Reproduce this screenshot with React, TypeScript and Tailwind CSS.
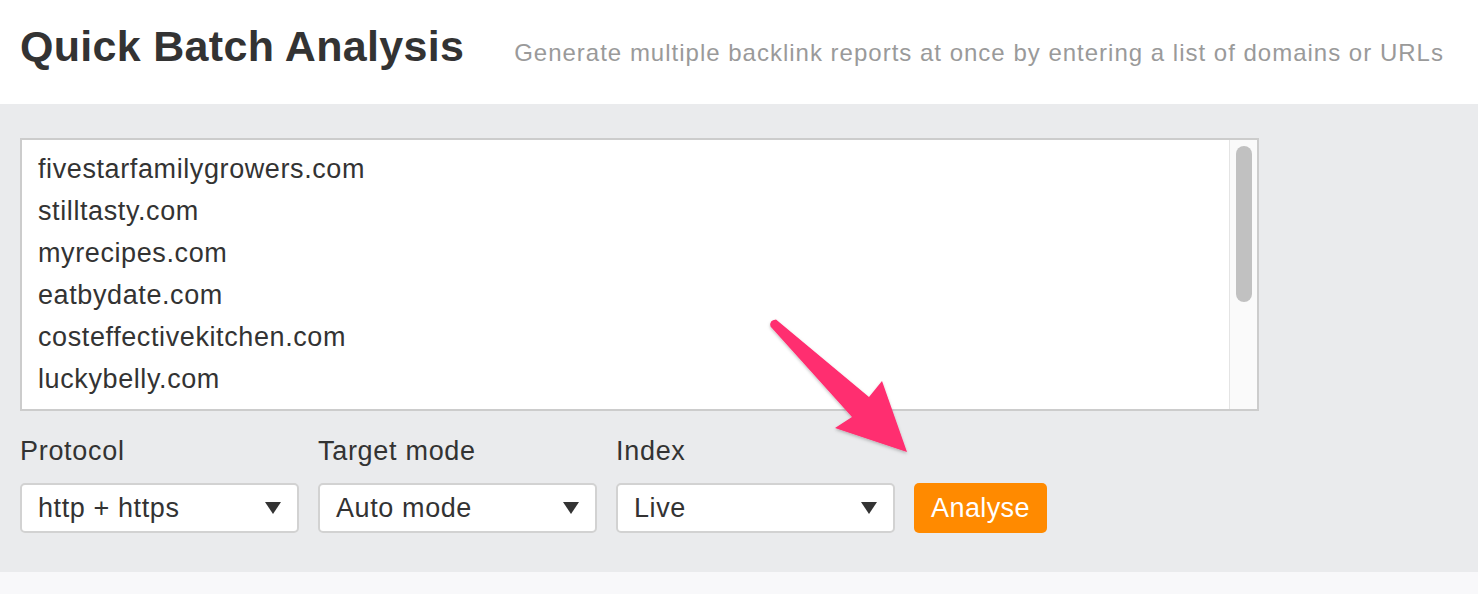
const domains = [
  "fivestarfamilygrowers.com",
  "stilltasty.com",
  "myrecipes.com",
  "eatbydate.com",
  "costeffectivekitchen.com",
  "luckybelly.com",
];

function Caret() {
  return (
    <svg width="16" height="12" viewBox="0 0 16 12" className="shrink-0">
      <polygon points="0,0 16,0 8,12" fill="#333" />
    </svg>
  );
}

function Select({ label, value }: { label: string; value: string }) {
  return (
    <div className="flex flex-col w-[279px]">
      <div className="h-[30px] leading-[30px] text-[27px] tracking-[0.7px] text-[#333] mb-[17px]">{label}</div>
      <div className="h-[50px] bg-white border-2 border-[#d2d2d2] rounded-[5px] flex items-center justify-between pl-[16px] pr-[16px]">
        <span className="text-[27px] tracking-[0.6px] text-[#333]">{value}</span>
        <Caret />
      </div>
    </div>
  );
}

export default function App() {
  return (
    <div className="relative w-[1478px] h-[594px] overflow-hidden bg-[#f8f8fa] font-['Liberation_Sans',Arial,sans-serif]">
      <header className="h-[104px] bg-white flex items-baseline pl-[20px] pt-[21px]">
        <h1 className="text-[43px] font-bold tracking-[0.3px] text-[#333] leading-[50px]">Quick Batch Analysis</h1>
        <p className="ml-[50px] text-[24px] tracking-[1px] text-[#9a9a9a]">
          Generate multiple backlink reports at once by entering a list of domains or URLs
        </p>
      </header>

      <section className="bg-[#eaebed] h-[468px] pt-[34px] px-[20px]">
        <div className="w-[1239px] h-[273px] bg-white border-2 border-[#cccccc] flex overflow-hidden">
          <div className="flex-1 pl-[16px] pt-[8px]">
            {domains.map((d) => (
              <div key={d} className="h-[42px] leading-[42px] text-[27px] tracking-[0.6px] text-[#333]">
                {d}
              </div>
            ))}
          </div>
          <div className="w-[28px] bg-[#fafafa] border-l border-[#e4e4e4] pt-[6px] flex justify-center">
            <div className="w-[16px] h-[156px] rounded-full bg-[#c1c1c1]" />
          </div>
        </div>

        <div className="flex items-end gap-[19px] mt-[25px]">
          <Select label="Protocol" value="http + https" />
          <Select label="Target mode" value="Auto mode" />
          <Select label="Index" value="Live" />
          <button className="h-[50px] w-[133px] rounded-[5px] bg-[#ff8a00] text-white text-[27px] tracking-[0.4px]">
            Analyse
          </button>
        </div>
      </section>

      <svg
        className="absolute left-[760px] top-[310px]"
        width="160"
        height="160"
        viewBox="760 310 160 160"
      >
        <defs>
          <filter id="sh" x="-20%" y="-20%" width="140%" height="140%">
            <feDropShadow dx="0" dy="1.5" stdDeviation="1.5" floodColor="#000" floodOpacity="0.25" />
          </filter>
        </defs>
        <path
          d="M770.5 326.5 Q769 320 776 319.5 L869 397 L882 381 L907 452 L835 428 L852 417 Z"
          fill="#ff2d6f"
          filter="url(#sh)"
        />
      </svg>
    </div>
  );
}
